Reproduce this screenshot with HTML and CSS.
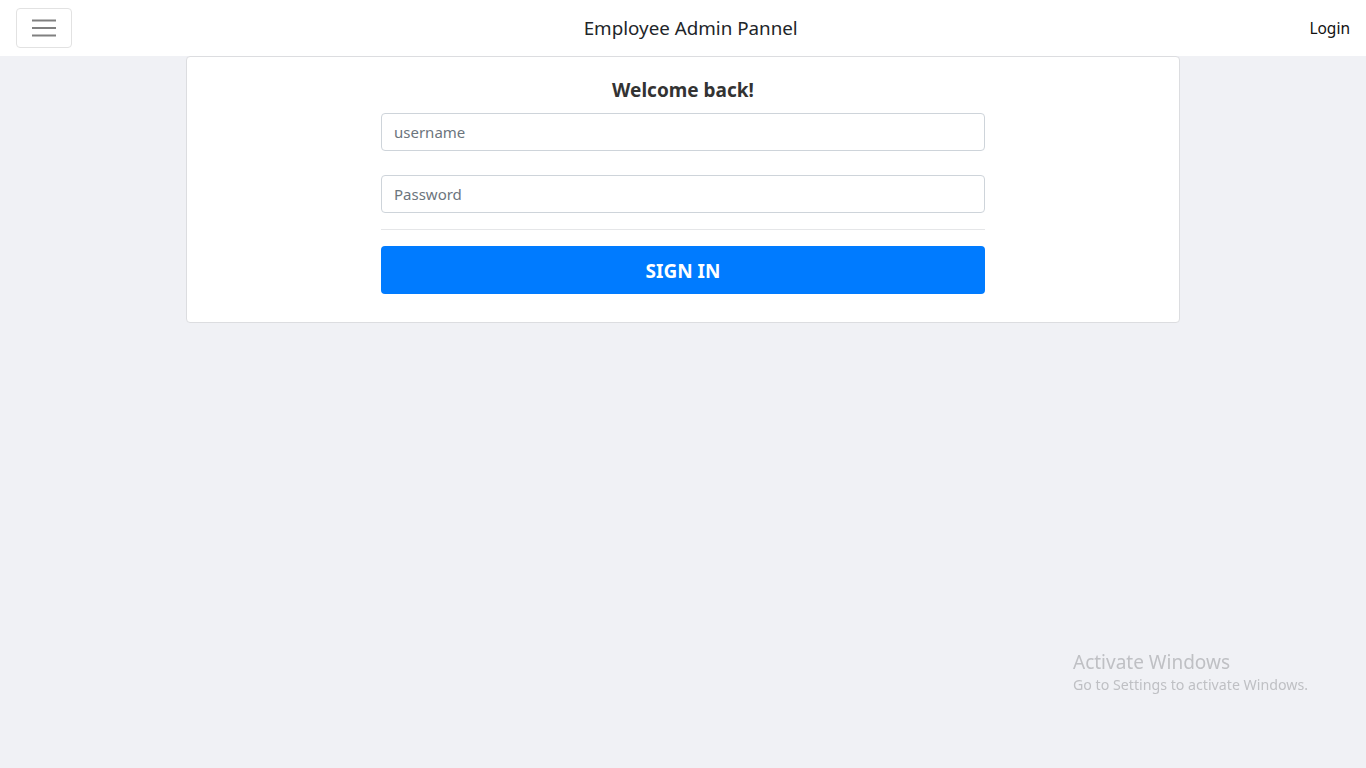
FILE: index.html
```html
<!DOCTYPE html>
<html lang="en">
<head>
<meta charset="utf-8">
<title>Employee Admin Pannel</title>
<link rel="stylesheet" href="styles.css">
</head>
<body>
<nav class="navbar">
  <button class="toggler" type="button" aria-label="Toggle navigation">
    <svg width="24" height="18" viewBox="0 0 24 18"><path d="M0 1.5h24M0 9h24M0 16.5h24" stroke="#808080" stroke-width="2"/></svg>
  </button>
  <div class="brand">Employee Admin Pannel</div>
  <a class="nav-link" href="#">Login</a>
</nav>
<main class="main">
  <div class="card">
    <h1 class="card-title">Welcome back!</h1>
    <form class="form">
      <input class="input" type="text" placeholder="username">
      <input class="input" type="password" placeholder="Password">
      <hr class="divider">
      <button class="btn" type="button">SIGN IN</button>
    </form>
  </div>
</main>
<div class="watermark">
  <div class="wm-title">Activate Windows</div>
  <div class="wm-sub">Go to Settings to activate Windows.</div>
</div>
</body>
</html>
```
FILE: styles.css
```css
* { box-sizing: border-box; }
html, body { margin: 0; height: 100%; }
body {
  background: #f0f1f5;
  font-family: "Noto Sans", "Open Sans", sans-serif;
  color: #212529;
  font-size: 16px;
}
.navbar {
  height: 56px;
  background: #fff;
  display: flex;
  align-items: center;
  justify-content: space-between;
  padding: 0 16px;
}
.toggler {
  width: 56px;
  height: 40px;
  border: 1px solid #e2e2e2;
  border-radius: 4px;
  background: #fff;
  display: flex;
  align-items: center;
  justify-content: center;
  padding: 0;
}
.brand {
  font-size: 18.8px;
  color: #212529;
}
.nav-link {
  font-size: 15.5px;
  color: #111;
  text-decoration: none;
}
.main {
  display: flex;
  justify-content: center;
}
.card {
  width: 994px;
  background: #fff;
  border: 1px solid #dcdde0;
  border-radius: 4px;
  padding: 20px 0 28px;
  display: flex;
  flex-direction: column;
  align-items: center;
}
.card-title {
  margin: 0 0 10px;
  font-size: 19px;
  font-weight: 700;
  color: #333;
  line-height: 26px;
}
.form {
  width: 604px;
  display: flex;
  flex-direction: column;
}
.input {
  height: 38px;
  border: 1px solid #ced4da;
  border-radius: 4px;
  padding: 0 12px;
  font-family: inherit;
  font-size: 15px;
  color: #495057;
  margin-bottom: 24px;
}
.input::placeholder { color: #6c757d; }
.input:last-of-type { margin-bottom: 16px; }
.divider {
  margin: 0 0 16px;
  border: 0;
  border-top: 1px solid #e5e6e8;
}
.btn {
  height: 48px;
  background: #007bff;
  border: 0;
  border-radius: 4px;
  color: #fff;
  font-family: inherit;
  font-size: 19px;
  font-weight: 700;
  padding-top: 2px;
}
.watermark {
  position: fixed;
  left: 1073px;
  top: 650px;
  color: #bfc0c4;
}
.wm-title { font-size: 19px; line-height: 24px; }
.wm-sub { font-size: 14.2px; line-height: 21px; }
```
